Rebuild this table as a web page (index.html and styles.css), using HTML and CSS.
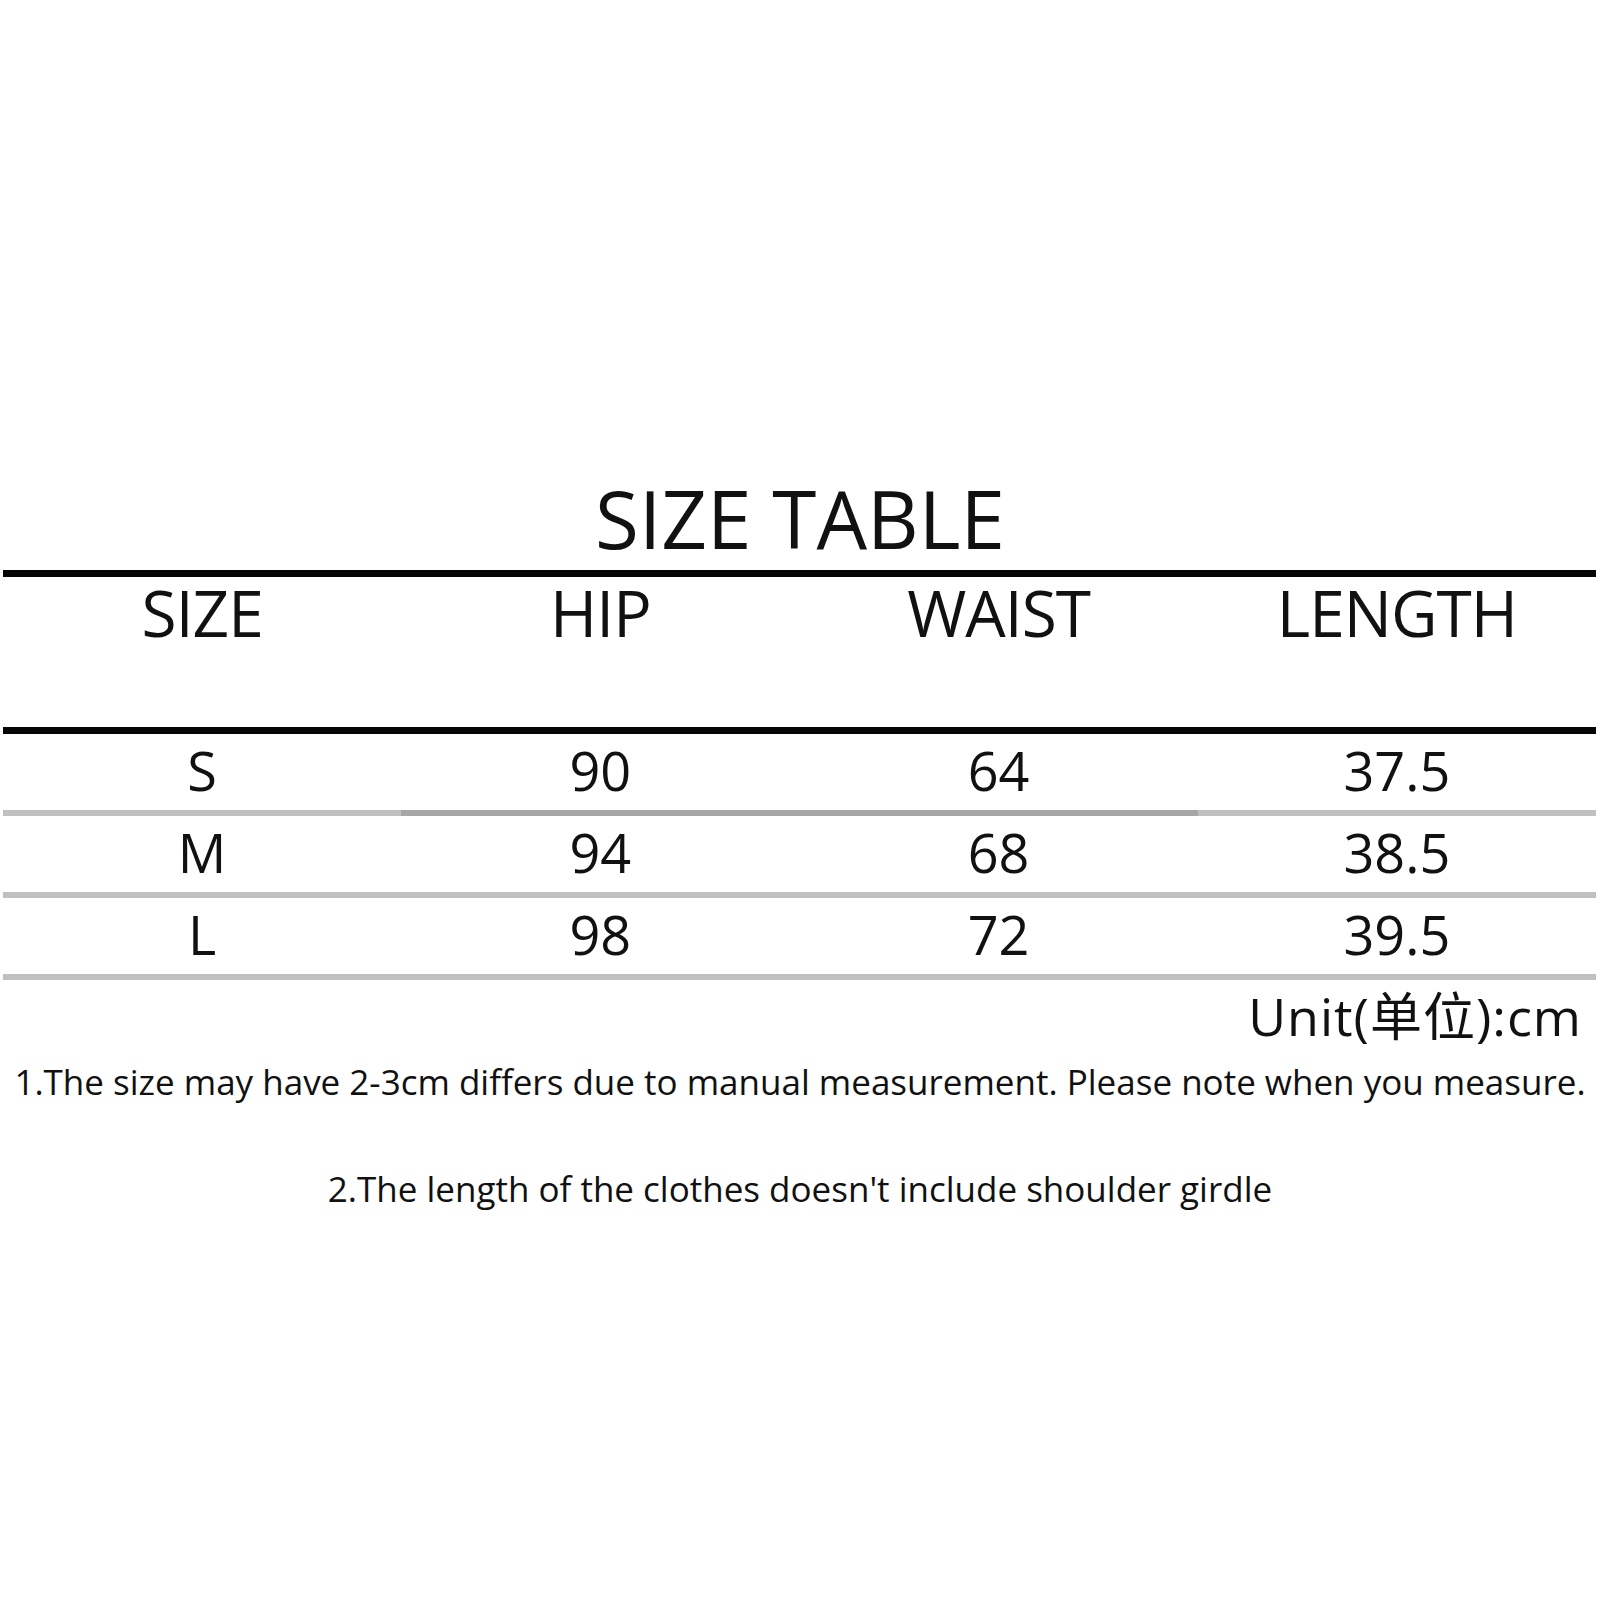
FILE: index.html
```html
<!DOCTYPE html>
<html lang="en">
<head>
<meta charset="utf-8">
<title>Size Table</title>
<link rel="stylesheet" href="styles.css">
</head>
<body>
<div class="page">
  <h1 class="title">SIZE TABLE</h1>
  <div class="table">
    <div class="cell head">SIZE</div>
    <div class="cell head">HIP</div>
    <div class="cell head">WAIST</div>
    <div class="cell head">LENGTH</div>

    <div class="cell">S</div>
    <div class="cell dark">90</div>
    <div class="cell dark">64</div>
    <div class="cell">37.5</div>

    <div class="cell">M</div>
    <div class="cell">94</div>
    <div class="cell">68</div>
    <div class="cell">38.5</div>

    <div class="cell">L</div>
    <div class="cell">98</div>
    <div class="cell">72</div>
    <div class="cell">39.5</div>
  </div>
  <p class="unit">Unit(单位):cm</p>
  <p class="note note1">1.The size may have 2-3cm differs due to manual measurement. Please note when you measure.</p>
  <p class="note note2">2.The length of the clothes doesn't include shoulder girdle</p>
</div>
</body>
</html>
```

FILE: styles.css
```css
html, body {
  margin: 0;
  padding: 0;
  background: #ffffff;
}

body {
  font-family: "Open Sans", "Noto Sans CJK SC", sans-serif;
  color: #111111;
}

.page {
  width: 1600px;
  height: 1600px;
  padding-top: 478px;
  box-sizing: border-box;
}

.title {
  margin: 0 0 12px 0;
  font-size: 80px;
  line-height: 80px;
  font-weight: 400;
  text-align: center;
}

.table {
  margin-left: 3px;
  width: 1593px;
  display: grid;
  grid-template-columns: repeat(4, 1fr);
  border-top: 7px solid #050505;
}

.cell {
  text-align: center;
  font-size: 54px;
  line-height: 54px;
  height: 82px;
  padding-top: 9px;
  box-sizing: border-box;
  border-bottom: 6px solid #c0c0c0;
}

.cell.dark {
  border-bottom-color: #a6a6a6;
}

.cell.head {
  font-size: 64px;
  line-height: 64px;
  letter-spacing: -1px;
  padding-top: 4px;
  height: 157px;
  border-bottom: 7px solid #050505;
}

.unit {
  margin: 10px 18px 0 0;
  text-align: right;
  font-size: 52px;
  line-height: 52px;
  letter-spacing: 1px;
}

.note {
  margin: 0;
  text-align: center;
  font-size: 35px;
  line-height: 36px;
  white-space: nowrap;
}

.note1 {
  margin-top: 22px;
}

.note2 {
  margin-top: 71px;
}
```
